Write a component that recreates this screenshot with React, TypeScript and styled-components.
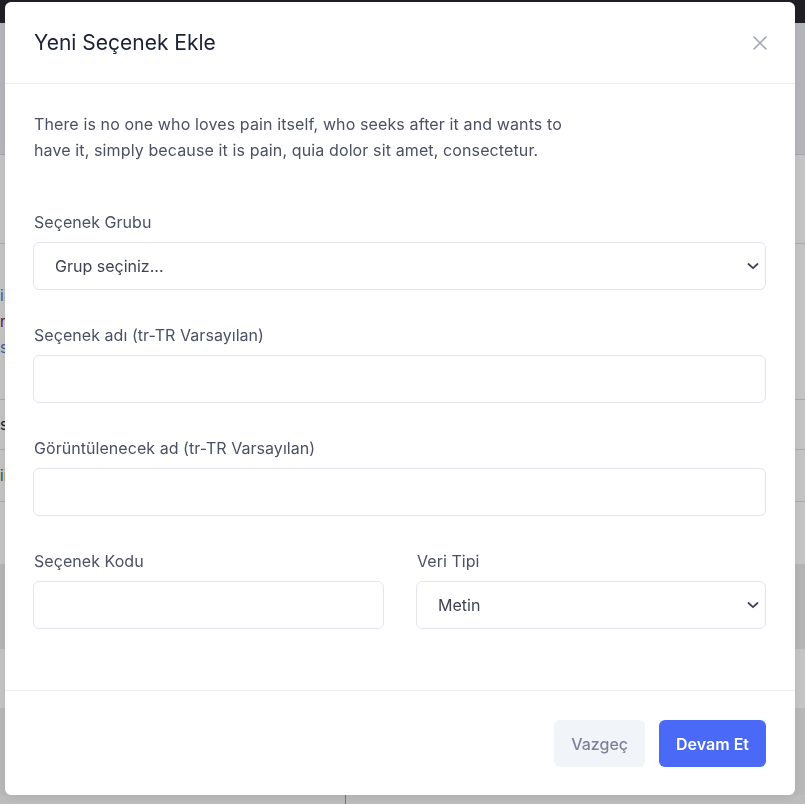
import React from 'react';
import styled, { createGlobalStyle } from 'styled-components';

const GlobalStyle = createGlobalStyle`
  html, body {
    margin: 0;
    padding: 0;
    height: 100%;
  }
  body {
    font-family: Inter, "Noto Sans", "Liberation Sans", sans-serif;
    background: #ffffff;
    overflow: hidden;
  }
`;

/* page behind the dialog */
const Page = styled.div`
  display: flex;
  flex-direction: column;
  height: 804px;
  width: 805px;
`;

const TopBar = styled.div`
  height: 23px;
  background: #282830;
  flex-shrink: 0;
`;

const SubHeader = styled.div`
  height: 131px;
  background: #ebecf3;
  border-bottom: 1px solid #d6d8e0;
  flex-shrink: 0;
`;

const PageRow = styled.div<{ $h: number; $bg?: string; $line?: boolean }>`
  height: ${(p) => p.$h}px;
  background: ${(p) => p.$bg || '#ffffff'};
  border-bottom: ${(p) => (p.$line ? '1px solid #dcdde3' : 'none')};
  flex-shrink: 0;
  display: flex;
  flex-direction: column;
  justify-content: center;
  gap: 6px;
  font-size: 15px;
`;

const PageText = styled.span<{ $color: string }>`
  color: ${(p) => p.$color};
  line-height: 20px;
`;

const BottomStrip = styled.div`
  flex: 1;
  background: #f5f5f5;
  display: flex;
`;

const BottomCell = styled.div`
  width: 345px;
  border-right: 1px solid #9a9a9a;
`;

/* dialog */
const Overlay = styled.div`
  position: fixed;
  inset: 0;
  background: rgba(0, 0, 0, 0.23);
  display: flex;
  align-items: flex-start;
  padding: 2px 0 0 5px;
`;

const Modal = styled.div`
  width: 790px;
  background: #ffffff;
  border-radius: 6px;
  box-shadow: 0 2px 10px rgba(0, 0, 0, 0.08);
  display: flex;
  flex-direction: column;
`;

const Header = styled.div`
  display: flex;
  align-items: center;
  justify-content: space-between;
  padding: 28px;
  height: 25px;
  border-bottom: 1px solid #eceef3;
`;

const Title = styled.h3`
  margin: 0;
  font-size: 21px;
  line-height: 25px;
  font-weight: 400;
  color: #1b2036;
  padding-left: 1px;
`;

const CloseButton = styled.button`
  border: 0;
  background: transparent;
  padding: 0;
  width: 14px;
  height: 14px;
  display: flex;
  cursor: pointer;
`;

const Body = styled.div`
  padding: 27px 29px 61px 28px;
`;

const Intro = styled.p`
  margin: 0 0 48px 1px;
  max-width: 550px;
  font-size: 16px;
  line-height: 26px;
  letter-spacing: 0.12px;
  color: #4b5064;
`;

const Group = styled.div<{ $last?: boolean }>`
  display: flex;
  flex-direction: column;
  margin-bottom: ${(p) => (p.$last ? 0 : 34)}px;
  min-width: 0;
`;

const Label = styled.label`
  font-size: 16px;
  line-height: 22px;
  letter-spacing: 0.05px;
  color: #4b5064;
  margin-bottom: 9px;
  padding-left: 1px;
`;

const Input = styled.input`
  box-sizing: border-box;
  height: 48px;
  width: 100%;
  border: 1px solid #e4e6ef;
  border-radius: 6px;
  padding: 0 21px;
  font-family: inherit;
  font-size: 16px;
  color: #3f4254;
  outline: none;
  background: #ffffff;
`;

const SelectWrap = styled.div`
  position: relative;
`;

const Select = styled.select`
  box-sizing: border-box;
  height: 48px;
  width: 100%;
  border: 1px solid #e4e6ef;
  border-radius: 6px;
  padding: 0 40px 0 21px;
  font-family: inherit;
  font-size: 16px;
  color: #3f4254;
  background: #ffffff;
  appearance: none;
  -webkit-appearance: none;
  outline: none;
`;

const Chevron = styled.svg`
  position: absolute;
  right: 6px;
  top: 50%;
  transform: translateY(-50%);
  pointer-events: none;
`;

const Row = styled.div`
  display: grid;
  grid-template-columns: 351px 350px;
  column-gap: 32px;
`;

const Footer = styled.div`
  display: flex;
  justify-content: flex-end;
  gap: 14px;
  padding: 29px 29px 28px 28px;
  border-top: 1px solid #eceef3;
`;

const Button = styled.button<{ $primary?: boolean }>`
  height: 47px;
  padding: 0 17px;
  border: 0;
  border-radius: 6px;
  font-family: inherit;
  font-size: 16px;
  font-weight: ${(p) => (p.$primary ? 600 : 500)};
  background: ${(p) => (p.$primary ? '#4a69f6' : '#f1f4f8')};
  color: ${(p) => (p.$primary ? '#ffffff' : '#7e8299')};
  cursor: pointer;
`;

const ChevronIcon = () => (
  <Chevron width="14" height="10" viewBox="0 0 14 10">
    <path d="M2.5 3l4.5 4.2L11.5 3" fill="none" stroke="#3f4254" strokeWidth="1.8" strokeLinecap="round" strokeLinejoin="round" />
  </Chevron>
);

const App = () => {
  return (
    <>
      <GlobalStyle />
      <Page>
        <TopBar />
        <SubHeader />
        <PageRow $h={88} $line />
        <PageRow $h={155} $line>
          <PageText $color="#3a7bd5">iiiii</PageText>
          <PageText $color="#7a2a2a">nnnnn</PageText>
          <PageText $color="#3a7bd5">sssss</PageText>
        </PageRow>
        <PageRow $h={49} $line>
          <PageText $color="#222">sssss</PageText>
        </PageRow>
        <PageRow $h={51} $line>
          <PageText $color="#556b2f">iiiii</PageText>
        </PageRow>
        <PageRow $h={62} />
        <PageRow $h={85} $bg="#ebebeb" />
        <PageRow $h={59} />
        <PageRow $h={87} $bg="#f0f0f0" />
        <BottomStrip>
          <BottomCell />
        </BottomStrip>
      </Page>

      <Overlay>
        <Modal>
          <Header>
            <Title>Yeni Seçenek Ekle</Title>
            <CloseButton aria-label="Kapat">
              <svg width="14" height="14" viewBox="0 0 14 14">
                <path d="M1 1l12 12M13 1L1 13" stroke="#a1a5b7" strokeWidth="1.6" strokeLinecap="round" />
              </svg>
            </CloseButton>
          </Header>

          <Body>
            <Intro>
              There is no one who loves pain itself, who seeks after it and wants to have it, simply because it is
              pain, quia dolor sit amet, consectetur.
            </Intro>

            <Group>
              <Label>Seçenek Grubu</Label>
              <SelectWrap>
                <Select defaultValue="">
                  <option value="">Grup seçiniz...</option>
                </Select>
                <ChevronIcon />
              </SelectWrap>
            </Group>

            <Group>
              <Label>Seçenek adı (tr-TR Varsayılan)</Label>
              <Input type="text" />
            </Group>

            <Group>
              <Label>Görüntülenecek ad (tr-TR Varsayılan)</Label>
              <Input type="text" />
            </Group>

            <Row>
              <Group $last>
                <Label>Seçenek Kodu</Label>
                <Input type="text" />
              </Group>
              <Group $last>
                <Label>Veri Tipi</Label>
                <SelectWrap>
                  <Select defaultValue="metin">
                    <option value="metin">Metin</option>
                  </Select>
                  <ChevronIcon />
                </SelectWrap>
              </Group>
            </Row>
          </Body>

          <Footer>
            <Button>Vazgeç</Button>
            <Button $primary>Devam Et</Button>
          </Footer>
        </Modal>
      </Overlay>
    </>
  );
};

export default App;
